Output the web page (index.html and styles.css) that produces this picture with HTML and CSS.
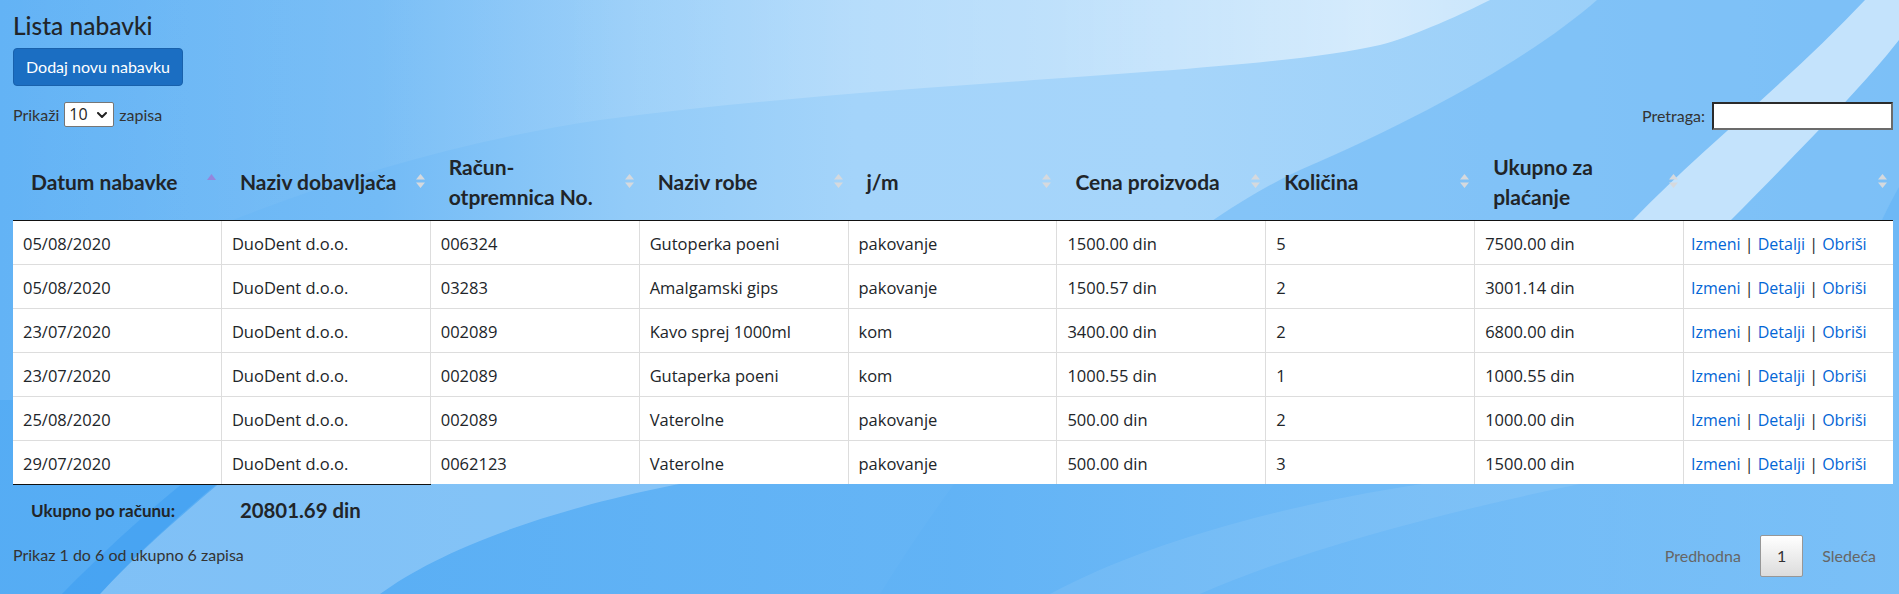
FILE: index.html
```html
<!DOCTYPE html>
<html lang="sr">
<head>
<meta charset="utf-8">
<title>Lista nabavki</title>
<link rel="stylesheet" href="styles.css">
</head>
<body>
<svg class="backdrop" viewBox="0 0 1899 594" preserveAspectRatio="none" aria-hidden="true">
  <defs>
    <linearGradient id="baseGrad" x1="0" y1="0" x2="1899" y2="0" gradientUnits="userSpaceOnUse">
      <stop offset="0" stop-color="#63b3f5"/>
      <stop offset="0.2" stop-color="#73bbf6"/>
      <stop offset="0.33" stop-color="#92cbf8"/>
      <stop offset="0.45" stop-color="#a4d4fa"/>
      <stop offset="0.62" stop-color="#a6d5fa"/>
      <stop offset="1" stop-color="#93ccf8"/>
    </linearGradient>
    <linearGradient id="swooshGrad" x1="0" y1="0" x2="1899" y2="0" gradientUnits="userSpaceOnUse">
      <stop offset="0" stop-color="#ffffff" stop-opacity="0"/>
      <stop offset="0.3" stop-color="#ffffff" stop-opacity="0.08"/>
      <stop offset="0.55" stop-color="#ffffff" stop-opacity="0.28"/>
      <stop offset="0.72" stop-color="#ffffff" stop-opacity="0.55"/>
      <stop offset="0.8" stop-color="#ffffff" stop-opacity="0.45"/>
    </linearGradient>
    <linearGradient id="bottomGrad" x1="0" y1="0" x2="1899" y2="0" gradientUnits="userSpaceOnUse">
      <stop offset="0" stop-color="#55acf4" stop-opacity="0.95"/>
      <stop offset="0.5" stop-color="#5eb1f5" stop-opacity="0.9"/>
      <stop offset="1" stop-color="#78bff7" stop-opacity="0.6"/>
    </linearGradient>
  </defs>
  <rect width="1899" height="594" fill="url(#baseGrad)"/>
  <path d="M0 0 L1490 0 C1440 25 1400 40 1380 45 C1250 75 900 80 600 120 C400 150 200 220 0 330 Z" fill="url(#swooshGrad)"/>
  <path d="M1597 0 C1540 50 1440 110 1300 170 C1150 240 1000 400 880 594 L1899 594 L1899 0 Z" fill="#6ab7f6" opacity="0.55"/>
  <path d="M1865 0 L1899 0 L1899 40 C1860 90 1790 160 1731 220 C1700 260 1680 300 1660 340 L1570 340 C1590 300 1610 250 1633 220 C1700 150 1790 80 1865 0 Z" fill="#c4e3fc"/>
  <path d="M1899 187 L1899 320 L1840 320 C1860 270 1880 220 1899 187 Z" fill="#6db8f6"/>
  <rect x="0" y="400" width="1899" height="194" fill="url(#bottomGrad)"/>
  <path d="M100 594 C150 540 200 500 235 470 L760 470 C560 500 440 550 380 594 Z" fill="#ffffff" opacity="0.24"/>
  <path d="M62 594 C110 545 160 500 200 470 L234 470 C190 505 140 550 100 594 Z" fill="#3c9cf0" opacity="0.55"/>
  <path d="M1050 594 C1150 540 1300 500 1450 480 L1600 480 C1450 510 1300 550 1200 594 Z" fill="#ffffff" opacity="0.08"/>
</svg>

<main class="page">
  <h3 class="title">Lista nabavki</h3>
  <a class="btn btn-primary" href="#">Dodaj novu nabavku</a>

  <div class="dt-top">
    <label class="dt-length">
      <span>Prikaži</span>
      <span class="select-wrap">
        <select class="dt-select" name="length">
          <option>10</option>
          <option>25</option>
          <option>50</option>
          <option>100</option>
        </select>
        <svg class="chevron" viewBox="0 0 10 6" aria-hidden="true"><path d="M1 1 L5 5 L9 1" fill="none" stroke="#222" stroke-width="2" stroke-linecap="round" stroke-linejoin="round"/></svg>
      </span>
      <span>zapisa</span>
    </label>
    <label class="dt-filter">
      <span>Pretraga:</span>
      <input class="dt-search" type="search">
    </label>
  </div>

  <table class="dt">
    <thead>
      <tr>
        <th>Datum nabavke<svg class="sort" viewBox="0 0 9 14" aria-hidden="true"><path d="M0 6 L4.5 0 L9 6 Z" fill="#9486dc"/></svg></th>
        <th>Naziv dobavljača<svg class="sort" viewBox="0 0 9 14" aria-hidden="true"><path d="M0 5.5 L4.5 0 L9 5.5 Z M0 8.5 L9 8.5 L4.5 14 Z" fill="#d6d9dd"/></svg></th>
        <th>Račun-<br>otpremnica No.<svg class="sort" viewBox="0 0 9 14" aria-hidden="true"><path d="M0 5.5 L4.5 0 L9 5.5 Z M0 8.5 L9 8.5 L4.5 14 Z" fill="#d6d9dd"/></svg></th>
        <th>Naziv robe<svg class="sort" viewBox="0 0 9 14" aria-hidden="true"><path d="M0 5.5 L4.5 0 L9 5.5 Z M0 8.5 L9 8.5 L4.5 14 Z" fill="#d6d9dd"/></svg></th>
        <th>j/m<svg class="sort" viewBox="0 0 9 14" aria-hidden="true"><path d="M0 5.5 L4.5 0 L9 5.5 Z M0 8.5 L9 8.5 L4.5 14 Z" fill="#d6d9dd"/></svg></th>
        <th>Cena proizvoda<svg class="sort" viewBox="0 0 9 14" aria-hidden="true"><path d="M0 5.5 L4.5 0 L9 5.5 Z M0 8.5 L9 8.5 L4.5 14 Z" fill="#d6d9dd"/></svg></th>
        <th>Količina<svg class="sort" viewBox="0 0 9 14" aria-hidden="true"><path d="M0 5.5 L4.5 0 L9 5.5 Z M0 8.5 L9 8.5 L4.5 14 Z" fill="#d6d9dd"/></svg></th>
        <th>Ukupno za<br>plaćanje<svg class="sort" viewBox="0 0 9 14" aria-hidden="true"><path d="M0 5.5 L4.5 0 L9 5.5 Z M0 8.5 L9 8.5 L4.5 14 Z" fill="#d6d9dd"/></svg></th>
        <th><svg class="sort" viewBox="0 0 9 14" aria-hidden="true"><path d="M0 5.5 L4.5 0 L9 5.5 Z M0 8.5 L9 8.5 L4.5 14 Z" fill="#d6d9dd"/></svg></th>
      </tr>
    </thead>
    <tbody>
      <tr>
        <td>05/08/2020</td><td>DuoDent d.o.o.</td><td>006324</td><td>Gutoperka poeni</td><td>pakovanje</td><td>1500.00 din</td><td>5</td><td>7500.00 din</td>
        <td class="actions"><a href="#">Izmeni</a> | <a href="#">Detalji</a> | <a href="#">Obriši</a></td>
      </tr>
      <tr>
        <td>05/08/2020</td><td>DuoDent d.o.o.</td><td>03283</td><td>Amalgamski gips</td><td>pakovanje</td><td>1500.57 din</td><td>2</td><td>3001.14 din</td>
        <td class="actions"><a href="#">Izmeni</a> | <a href="#">Detalji</a> | <a href="#">Obriši</a></td>
      </tr>
      <tr>
        <td>23/07/2020</td><td>DuoDent d.o.o.</td><td>002089</td><td>Kavo sprej 1000ml</td><td>kom</td><td>3400.00 din</td><td>2</td><td>6800.00 din</td>
        <td class="actions"><a href="#">Izmeni</a> | <a href="#">Detalji</a> | <a href="#">Obriši</a></td>
      </tr>
      <tr>
        <td>23/07/2020</td><td>DuoDent d.o.o.</td><td>002089</td><td>Gutaperka poeni</td><td>kom</td><td>1000.55 din</td><td>1</td><td>1000.55 din</td>
        <td class="actions"><a href="#">Izmeni</a> | <a href="#">Detalji</a> | <a href="#">Obriši</a></td>
      </tr>
      <tr>
        <td>25/08/2020</td><td>DuoDent d.o.o.</td><td>002089</td><td>Vaterolne</td><td>pakovanje</td><td>500.00 din</td><td>2</td><td>1000.00 din</td>
        <td class="actions"><a href="#">Izmeni</a> | <a href="#">Detalji</a> | <a href="#">Obriši</a></td>
      </tr>
      <tr>
        <td>29/07/2020</td><td>DuoDent d.o.o.</td><td>0062123</td><td>Vaterolne</td><td>pakovanje</td><td>500.00 din</td><td>3</td><td>1500.00 din</td>
        <td class="actions"><a href="#">Izmeni</a> | <a href="#">Detalji</a> | <a href="#">Obriši</a></td>
      </tr>
    </tbody>
    <tfoot>
      <tr>
        <th class="total-label">Ukupno po računu:</th>
        <th class="total-value">20801.69 din</th>
      </tr>
    </tfoot>
  </table>

  <div class="dt-bottom">
    <div class="dt-info">Prikaz 1 do 6 od ukupno 6 zapisa</div>
    <div class="dt-paginate">
      <a class="page-btn disabled" href="#">Predhodna</a>
      <a class="page-btn current" href="#">1</a>
      <a class="page-btn disabled" href="#">Sledeća</a>
    </div>
  </div>
</main>
</body>
</html>
```
FILE: styles.css
```css
html, body {
  margin: 0;
  padding: 0;
}

body {
  position: relative;
  width: 1899px;
  height: 594px;
  overflow: hidden;
  font-family: Lato, "Open Sans", "Liberation Sans", sans-serif;
  font-size: 16px;
  line-height: 24px;
  color: #212529;
  background: #6ab7f6;
}

.backdrop {
  position: absolute;
  left: 0;
  top: 0;
  width: 1899px;
  height: 594px;
  z-index: 0;
}

.page {
  position: relative;
  z-index: 1;
  padding: 11px 6px 0 13px;
}

.title {
  margin: 0 0 8px;
  font-size: 24.5px;
  line-height: 1.2;
  font-weight: 500;
  color: #212529;
}

.btn {
  display: inline-block;
  padding: 6px 12px;
  font-size: 16px;
  line-height: 24px;
  border: 1px solid transparent;
  border-radius: 4px;
  text-decoration: none;
  vertical-align: top;
}

.btn-primary {
  color: #fff;
  background-color: #1b6ec2;
  border-color: #1861ac;
}

/* DataTables top controls */
.dt-top {
  display: flex;
  justify-content: space-between;
  align-items: flex-start;
  margin-top: 16px;
  height: 28px;
  color: #333;
}

.dt-length {
  display: flex;
  align-items: center;
  gap: 5px;
  height: 25px;
}

.select-wrap {
  position: relative;
  display: inline-block;
  height: 25px;
}

.dt-select {
  -webkit-appearance: none;
  appearance: none;
  width: 50px;
  height: 25px;
  margin: 0;
  padding: 0 0 0 4px;
  font-family: "Open Sans", sans-serif;
  font-size: 16px;
  line-height: 23px;
  color: #1f1f1f;
  background: #fff;
  border: 1px solid #767676;
  border-radius: 2px;
}

.chevron {
  position: absolute;
  right: 7px;
  top: 10px;
  width: 10px;
  height: 6px;
  pointer-events: none;
}

.dt-filter {
  display: flex;
  align-items: center;
  gap: 7px;
  height: 28px;
}

.dt-search {
  box-sizing: border-box;
  width: 181px;
  height: 28px;
  margin: 0;
  padding: 1px 3px;
  font-family: inherit;
  font-size: 16px;
  background: #fff;
  border-style: solid;
  border-width: 2px;
  border-color: #2b2b2b #6b6b6b #6b6b6b #2b2b2b;
  border-radius: 0;
}

/* Table */
.dt {
  width: 1880px;
  margin-top: 10px;
  table-layout: fixed;
  border-collapse: separate;
  border-spacing: 0;
}

.dt thead th {
  position: relative;
  padding: 12px 18px 8px;
  font-size: 21px;
  line-height: 30px;
  font-weight: 700;
  text-align: left;
  vertical-align: middle;
  white-space: nowrap;
  color: #212529;
  border-bottom: 1px solid #111;
}

.sort {
  position: absolute;
  right: 6px;
  top: 50%;
  width: 9px;
  height: 14px;
  margin-top: -6px;
}

.dt tbody td {
  padding: 11px 10px 8px;
  font-family: "Open Sans", Lato, sans-serif;
  font-size: 16.5px;
  line-height: 24px;
  background: #fff;
  white-space: nowrap;
  overflow: hidden;
}

.dt tbody td:not(:last-child) {
  border-right: 1px solid #ddd;
}

.dt tbody tr + tr td {
  border-top: 1px solid #ddd;
}

.dt tbody td.actions {
  padding-left: 7px;
  font-size: 16px;
  color: #212529;
}

.actions a {
  color: #0366d6;
  text-decoration: none;
}

.dt tfoot th {
  padding: 10px 18px 5px;
  border-top: 1px solid #111;
  text-align: left;
  vertical-align: middle;
  font-weight: 700;
  white-space: nowrap;
  color: #212529;
}

.total-label {
  font-size: 17px;
  line-height: 25.5px;
}

.total-value {
  font-size: 20.4px;
  line-height: 30.6px;
}

/* Bottom controls */
.dt-bottom {
  display: flex;
  justify-content: space-between;
  align-items: flex-start;
}

.dt-info {
  padding-top: 12px;
  color: #333;
}

.dt-paginate {
  display: flex;
  padding-top: 4px;
}

.page-btn {
  box-sizing: border-box;
  min-width: 24px;
  margin-left: 2px;
  padding: 8px 16px;
  line-height: 24px;
  text-align: center;
  text-decoration: none;
  border: 1px solid transparent;
  border-radius: 2px;
  color: #333;
}

.page-btn.disabled {
  color: #666;
}

.page-btn.current {
  color: #333;
  border-color: #979797;
  background: linear-gradient(to bottom, #ffffff 0%, #dcdcdc 100%);
}
```
